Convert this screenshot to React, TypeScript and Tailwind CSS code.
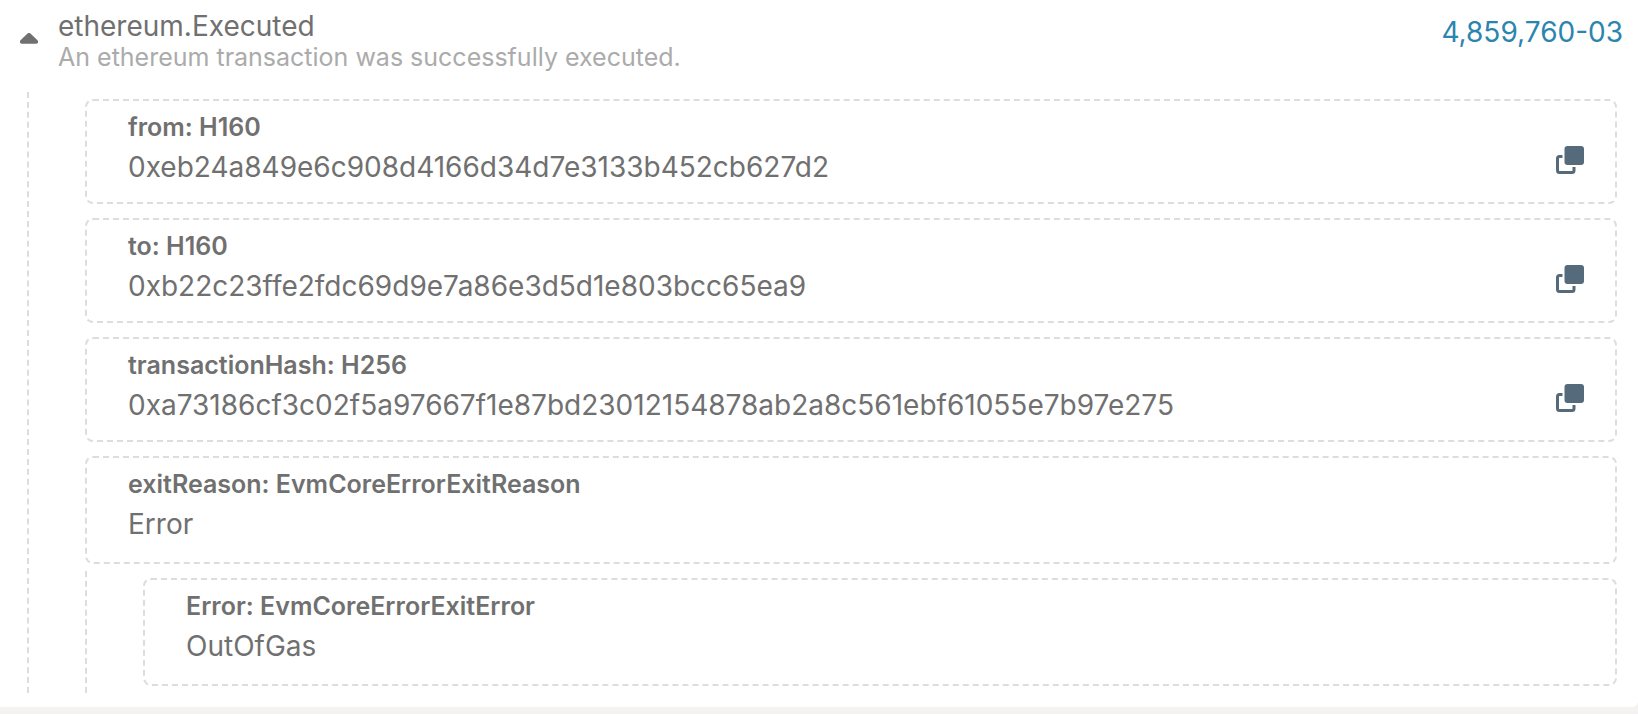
type FieldProps = { name: string; type: string; value: string; copyable?: boolean };

function CopyIcon() {
  return (
    <svg viewBox="0 0 28 28" className="block size-7" fill="none" aria-hidden="true">
      <rect x="8.5" y="0" width="19.5" height="19" rx="3" fill="#556b7b" />
      <path
        d="M6.500 10.500H3.500a2 2 0 0 0-2 2v12a2 2 0 0 0 2 2h12.500a2 2 0 0 0 2-2V21"
        stroke="#556b7b"
        strokeWidth="3"
      />
    </svg>
  );
}

function Field({ name, type, value, copyable }: FieldProps) {
  return (
    <div
      className={`flex items-start justify-between rounded-lg border-2 border-dashed border-[#dddddd] pt-[10px] pr-[31px] pl-[41px] ${
        copyable ? "pb-[15px]" : "pb-[18px]"
      }`}
    >
      <dl>
        <dt className="text-[25px] leading-8 font-semibold">
          {name}: {type}
        </dt>
        <dd className="mt-1 text-[28px] leading-10">{value}</dd>
      </dl>
      {copyable && (
        <button type="button" aria-label={`Copy ${name}`} className="mt-[35px] cursor-pointer">
          <CopyIcon />
        </button>
      )}
    </div>
  );
}

export default function App() {
  return (
    <main className="min-h-screen bg-white font-['Inter','Liberation_Sans',sans-serif] text-[#707070]">
      <div className="bg-[#f4f3f1] pb-[7px]">
        <article className="rounded-br-md bg-white pb-[14px]">
          <header className="flex h-[92px] items-start">
            <button type="button" aria-label="Collapse event" className="mt-[33px] ml-5 cursor-pointer">
              <svg viewBox="0 0 18 11" className="block h-[11px] w-[18px]" aria-hidden="true">
                <path d="M7.300.7a2.500 2.500 0 0 1 3.400 0l6.800 6.600C18.700 8.700 18 10.700 16.300 10.700H1.700C0 10.700-.7 8.700.5 7.300Z" fill="#707070" />
              </svg>
            </button>
            <div className="ml-5 flex-1 pt-[10px]">
              <h1 className="text-[28px] leading-8">ethereum.Executed</h1>
              <p className="text-[25px] leading-[30px] text-[#ababab]">
                An ethereum transaction was successfully executed.
              </p>
            </div>
            <a href="#4859760-03" className="mt-4 mr-[15px] text-[28px] leading-8 text-[#2b85ad]">
              4,859,760-03
            </a>
          </header>
          <div className="ml-[27px] flex flex-col gap-[14px] border-l-2 border-dashed border-[#dddddd] pt-[7px] pr-[21px] pl-14">
            <Field name="from" type="H160" value="0xeb24a849e6c908d4166d34d7e3133b452cb627d2" copyable />
            <Field name="to" type="H160" value="0xb22c23ffe2fdc69d9e7a86e3d5d1e803bcc65ea9" copyable />
            <Field
              name="transactionHash"
              type="H256"
              value="0xa73186cf3c02f5a97667f1e87bd23012154878ab2a8c561ebf61055e7b97e275"
              copyable
            />
            <div className="flex flex-col gap-[7px]">
              <Field name="exitReason" type="EvmCoreErrorExitReason" value="Error" />
              <div className="border-l-2 border-dashed border-[#dddddd] py-[7px] pl-14">
                <Field name="Error" type="EvmCoreErrorExitError" value="OutOfGas" />
              </div>
            </div>
          </div>
        </article>
      </div>
    </main>
  );
}
